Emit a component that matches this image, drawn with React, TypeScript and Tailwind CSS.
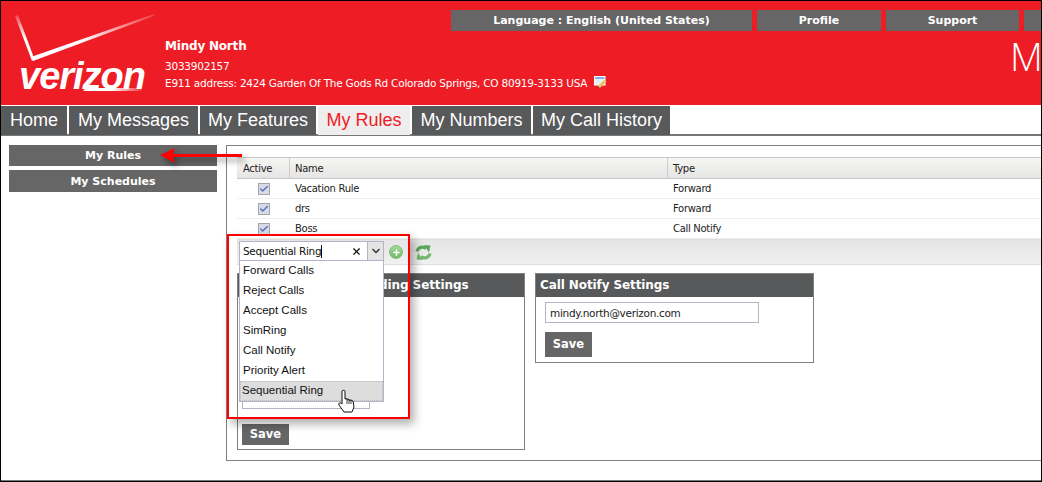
import { Check, ChevronDown, Plus, X } from "lucide-react";

const tabs = [
  { label: "Home", w: "w-[66px]" },
  { label: "My Messages", w: "w-[129px]" },
  { label: "My Features", w: "w-[116px]" },
  { label: "My Rules", w: "w-[92px]", active: true },
  { label: "My Numbers", w: "w-[119px]" },
  { label: "My Call History", w: "w-[137px]" },
];

const rules = [
  { name: "Vacation Rule", type: "Forward" },
  { name: "drs", type: "Forward" },
  { name: "Boss", type: "Call Notify" },
];

const ruleTypes = ["Forward Calls", "Reject Calls", "Accept Calls", "SimRing", "Call Notify", "Priority Alert", "Sequential Ring"];

const tahoma = "font-['DejaVu_Sans',sans-serif]";
const arial = "font-['Liberation_Sans',Arial,sans-serif]";

function Logo() {
  return (
    <div className="relative w-[164px] h-[104px] shrink-0">
      <svg width="164" height="104" className="absolute left-0 top-0">
        <defs>
          <linearGradient id="chk1" x1="1" y1="0" x2="0" y2="0">
            <stop offset="0" stopColor="#fff" stopOpacity="0.15" />
            <stop offset="0.6" stopColor="#fff" />
            <stop offset="1" stopColor="#fff" />
          </linearGradient>
          <linearGradient id="chk2" x1="0" y1="1" x2="0" y2="0">
            <stop offset="0" stopColor="#fff" />
            <stop offset="0.5" stopColor="#fff" />
            <stop offset="1" stopColor="#fff" stopOpacity="0.2" />
          </linearGradient>
          <linearGradient id="swoosh" x1="0" y1="0" x2="1" y2="0">
            <stop offset="0" stopColor="#fff" />
            <stop offset="0.5" stopColor="#fff" />
            <stop offset="1" stopColor="#fff" stopOpacity="0.1" />
          </linearGradient>
        </defs>
        <polygon points="14,15 17,14 33,57 31,60" fill="url(#chk2)" />
        <polygon points="30,56 153,13 153,15 32,60" fill="url(#chk1)" />
        <polygon points="85,87 141,87 141,90 82,90" fill="url(#swoosh)" />
      </svg>
      <span className={`absolute left-[18px] top-[53px] text-[38px] leading-[44px] font-bold italic tracking-[-1px] text-white ${arial}`}>verizon</span>
    </div>
  );
}

function SaveButton({ h }: { h: string }) {
  return <button className={`w-[47px] ${h} bg-[#666] text-white text-[11.5px] font-bold ${tahoma}`}>Save</button>;
}

function EditIcon() {
  return (
    <svg width="13" height="12" viewBox="0 0 13 12" className="shrink-0 -mt-[3px]">
      <rect x="0.5" y="0.5" width="10.5" height="8.5" fill="#e6f0fa" stroke="#fff" />
      <rect x="1" y="1" width="9.5" height="2" fill="#7fb0e6" />
      <path d="M4 10 L10 4 L12.5 5.5 L6.5 11.5 L4 11.5 Z" fill="#e8c45c" />
      <path d="M3.5 11 L5 11.5" stroke="#444" />
    </svg>
  );
}

function RefreshIcon() {
  return (
    <svg width="17" height="15" viewBox="0 0 17 15">
      <path d="M2 6.5 C3 2 8 1 11 3.5" fill="none" stroke="#5aa858" strokeWidth="3.2" />
      <polygon points="9,0 15.5,0.5 14,7.5" fill="#5aa858" />
      <path d="M15 8.5 C14 13 9 14 6 11.5" fill="none" stroke="#74b86e" strokeWidth="3.2" />
      <polygon points="8,15 1.5,14.5 3,7.5" fill="#74b86e" />
    </svg>
  );
}

export default function App() {
  return (
    <div className="relative w-[1042px] h-[482px] overflow-hidden bg-white border-[1px] border-black border-b-0">
      <header className="flex h-[104px] bg-[#ee1c25] overflow-hidden">
        <Logo />
        <div className={`w-[286px] shrink-0 pt-[37px] text-white whitespace-nowrap ${tahoma}`}>
          <div className="text-[12px] font-bold leading-[16px] tracking-[-0.2px]">Mindy North</div>
          <div className="text-[10.5px] leading-[14px] mt-[5px] tracking-[-0.23px]">3033902157</div>
          <div className="flex items-center gap-[7px] w-fit text-[10.5px] leading-[14px] mt-[3px] tracking-[-0.23px]">
            <span>E911 address: 2424 Garden Of The Gods Rd Colorado Springs, CO 80919-3133 USA</span>
            <EditIcon />
          </div>
        </div>
        <div className="flex-1 min-w-0 pt-[9px]">
          <div className={`flex gap-[5px] text-white text-[11px] font-bold ${tahoma}`}>
            <div className="w-[301px] h-[21px] pt-[2px] shrink-0 bg-[#666] flex items-center justify-center">Language : English (United States)</div>
            <div className="w-[124px] h-[21px] pt-[2px] shrink-0 bg-[#666] flex items-center justify-center">Profile</div>
            <div className="w-[133px] h-[21px] pt-[2px] shrink-0 bg-[#666] flex items-center justify-center">Support</div>
            <div className="w-[133px] h-[21px] shrink-0 bg-[#666]" />
          </div>
          <div className="ml-[559px] mt-[3px] text-[38px] leading-[44px] font-light text-white whitespace-nowrap font-['Open_Sans',sans-serif]">My</div>
        </div>
      </header>

      <nav className={`flex gap-[2px] h-[31px] pt-px border-b-2 border-[#777] text-[18px] ${arial}`}>
        {tabs.map((t) => (
          <div
            key={t.label}
            className={`${t.w} h-[29px] flex items-center justify-center ${t.active ? "bg-[#eee] text-[#ee1c25]" : "bg-[#58595b] text-white"}`}
          >
            {t.label}
          </div>
        ))}
      </nav>

      <div className="flex pt-[9px] h-[344px] pl-[8px]">
        <aside className={`w-[208px] shrink-0 flex flex-col gap-[4px] text-white text-[11px] font-bold ${tahoma}`}>
          <div className="h-[21px] pt-[2px] bg-[#666] flex items-center justify-center">My Rules</div>
          <div className="h-[22px] pt-[2px] bg-[#666] flex items-center justify-center">My Schedules</div>
        </aside>

        <main className="ml-[9px] w-[830px] shrink-0 h-[316px] border border-[#808080] border-r-0 pt-[11px] pl-[10px]">
          <div className={`text-[10px] tracking-[-0.3px] text-[#222] ${tahoma}`}>
            <div className="flex h-[22px] items-center bg-gradient-to-b from-[#f6f6f2] to-[#e5e5e5] border-y border-[#c8c8c8]">
              <div className="w-[53px] h-full pl-[6px] flex items-center border-r border-[#ccc]">Active</div>
              <div className="w-[378px] h-full pl-[5px] flex items-center border-r border-[#ccc]">Name</div>
              <div className="pl-[5px]">Type</div>
            </div>
            {rules.map((r) => (
              <div key={r.name} className="flex h-[20px] items-center border-b border-[#eee]">
                <div className="w-[53px] flex justify-center">
                  <span className="w-[12px] h-[12px] bg-[#d8dae6] border border-[#a5a5a5] flex items-center justify-center">
                    <Check size={10} strokeWidth={3.5} className="text-[#5672bd]" />
                  </span>
                </div>
                <div className="w-[378px] pl-[5px]">{r.name}</div>
                <div className="pl-[5px]">{r.type}</div>
              </div>
            ))}
            <div className="h-[26px] bg-gradient-to-b from-[#e5e5e5] to-[#f0f0f0] border-y border-[#ddd] flex items-center pl-[152px] gap-[12px]">
              <span className="w-[14px] h-[14px] rounded-full bg-gradient-to-b from-[#a5d99a] to-[#6dbb68] border border-[#7fbf78] flex items-center justify-center">
                <Plus size={9} strokeWidth={4} className="text-white" />
              </span>
              <RefreshIcon />
            </div>
          </div>

          <div className="flex items-start gap-[10px] mt-[8px]">
            <section className="w-[288px] h-[177px] shrink-0 border border-[#808080] flex flex-col">
              <h3 className={`h-[23px] shrink-0 bg-[#58595b] pl-[19px] text-white text-[12px] tracking-[-0.1px] font-bold leading-[23px] whitespace-nowrap overflow-hidden ${tahoma}`}>Sequential Forwarding Settings</h3>
              <div className="flex-1 pl-[4px] flex flex-col justify-end pb-[4px]">
                <div className="w-[128px] h-[21px] mb-[15px] border border-[#b4b4c8]" />
                <SaveButton h="h-[21px]" />
              </div>
            </section>
            <section className="w-[279px] h-[90px] shrink-0 border border-[#808080]">
              <h3 className={`h-[23px] bg-[#58595b] pl-[4px] text-white text-[12px] tracking-[-0.1px] font-bold leading-[23px] ${tahoma}`}>Call Notify Settings</h3>
              <div className="pl-[9px] pt-[5px]">
                <div className={`w-[214px] h-[21px] border border-[#b4b4c8] pl-[4px] text-[10.5px] tracking-[-0.3px] leading-[20px] text-[#222] ${tahoma}`}>mindy.north@verizon.com</div>
                <div className="mt-[7px]"><SaveButton h="h-[25px]" /></div>
              </div>
            </section>
          </div>
        </main>
      </div>

      {/* rule type combo, opened over the settings panels */}
      <div className="absolute left-[238px] top-[240px] w-[145px] text-[#111]">
        <div className={`flex h-[20px] w-[145px] bg-white border border-[#b4b4c8] ${tahoma}`}>
          <div className="w-[127px] flex items-center justify-between pl-[3px] pr-[5px] text-[10.5px] tracking-[-0.3px]">
            <span className="border-r border-black leading-[13px]">Sequential Ring</span>
            <X size={11} strokeWidth={2.5} />
          </div>
          <div className="flex-1 bg-[#e5e5e5] border-l border-[#b4b4c8] flex items-center justify-center">
            <ChevronDown size={12} strokeWidth={3.5} className="text-[#444]" />
          </div>
        </div>
        <ul className={`bg-white border border-t-0 border-[#b4b4c8] text-[11.5px] ${arial}`}>
          {ruleTypes.map((t, i) => (
            <li key={t} className={`h-[20px] flex items-center ${i === ruleTypes.length - 1 ? "bg-[#ddd] border border-dotted border-[#bbb] pl-[1px]" : "pl-[3px]"}`}>{t}</li>
          ))}
        </ul>
      </div>

      {/* callouts drawn on the screenshot */}
      <div className="absolute left-[226px] top-[233px] w-[183px] h-[185px] border-2 border-[#f00] shadow-[4px_5px_9px_rgba(0,0,0,0.32)]" />
      <svg className="absolute left-[158px] top-[146px] drop-shadow-[3px_4px_3px_rgba(0,0,0,0.45)]" width="90" height="22">
        <path d="M1 8 L16 1 L14 7 L83 7 L83 10 L14 10 L16 16 Z" fill="#f00" />
      </svg>
      <svg className="absolute left-[336px] top-[388px]" width="20" height="24" viewBox="0 0 20 24">
        <path d="M5 2 C5 1 8 1 8 2 L8 10 L10 9.5 L10 11 L12 10 L12 11.5 L14 11 L16 12 L17 18 L15 23 L7 23 L2 16 C1 14 3 13 5 15 Z" fill="#fff" stroke="#111" strokeWidth="1" />
        <path d="M10 11 L10 15 M12 11.5 L12 15 M14 11 L14 15" stroke="#111" strokeWidth="0.8" fill="none" />
      </svg>
      <div className="absolute left-0 right-0 bottom-0 h-[2px] bg-black border-t border-[#777]" />
    </div>
  );
}
